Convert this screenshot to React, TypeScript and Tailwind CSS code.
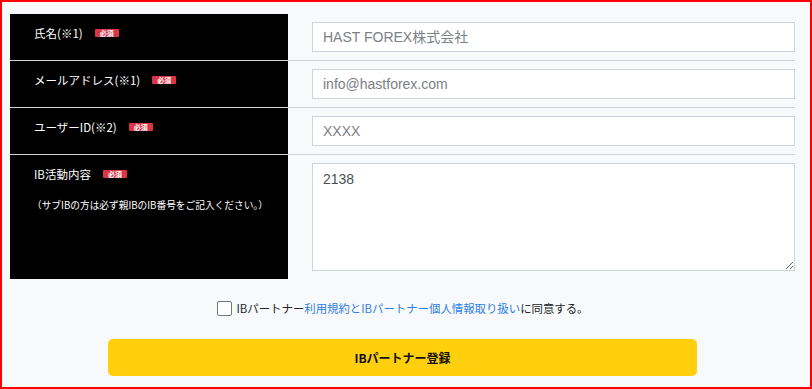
import React from "react";

const jp = { fontFamily: '"Noto Sans CJK JP", "Noto Sans", sans-serif' };
const latin = { fontFamily: '"Liberation Sans", "Noto Sans CJK JP", sans-serif' };

function Badge() {
  return (
    <span className="ml-[12px] inline-flex h-[8px] w-[24px] items-center justify-center rounded-[1px] bg-[#dc3545] text-[7px] font-bold leading-none text-white">
      必須
    </span>
  );
}

function Row({ label, placeholder }: { label: string; placeholder: string }) {
  return (
    <div className="flex border-b border-[#d2d2d2]">
      <div className="w-[278px] shrink-0 bg-black pl-6 pt-[10px]">
        <div className="flex items-center text-[11.5px] leading-[18px] text-white" style={jp}>
          <span>{label}</span>
          <Badge />
        </div>
      </div>
      <div className="flex-1 py-2 pl-6">
        <input
          className="h-[30px] w-full border border-[#ced4da] bg-white px-[10px] text-[14px] text-[#495057] outline-none placeholder:text-[#7b8085]"
          style={latin}
          placeholder={placeholder}
        />
      </div>
    </div>
  );
}

export default function App() {
  return (
    <div className="h-[389px] w-[812px] overflow-hidden border-2 border-[#ff0000] bg-[#f8f9fa] pl-2 pr-[15px] pt-3" style={jp}>
      <div className="flex flex-col">
        <Row label="氏名(※1)" placeholder="HAST FOREX株式会社" />
        <Row label="メールアドレス(※1)" placeholder="info@hastforex.com" />
        <Row label="ユーザーID(※2)" placeholder="XXXX" />
        <div className="flex">
          <div className="w-[278px] shrink-0 bg-black pl-6 pt-[10px]">
            <div className="flex items-center text-[11.5px] leading-[18px] text-white" style={jp}>
              <span>IB活動内容</span>
              <Badge />
            </div>
            <div className="mt-[15px] -ml-[2px] text-[9.7px] leading-[14px] text-white" style={jp}>
              （サブIBの方は必ず親IBのIB番号をご記入ください。）
            </div>
          </div>
          <div className="flex-1 py-2 pl-6">
            <textarea
              className="block h-[108px] w-full resize-y border border-[#ced4da] bg-white px-[10px] py-[5px] text-[14px] text-[#495057] outline-none"
              style={latin}
              defaultValue="2138"
            />
          </div>
        </div>
      </div>

      <div className="mt-[22px] flex items-center justify-center gap-[5px]">
        <input
          type="checkbox"
          className="m-0 h-[15px] w-[15px] appearance-none rounded-[2px] border border-[#767676] bg-white"
        />
        <span className="text-[11.4px] leading-[15px] text-[#212529]">
          IBパートナー<span className="text-[#2f7fe6]">利用規約とIBパートナー個人情報取り扱い</span>に同意する。
        </span>
      </div>

      <div className="mt-[23px] flex justify-center">
        <button className="flex h-[37px] w-[589px] items-center justify-center rounded-[5px] bg-[#ffcf0e] text-[12px] font-bold text-[#111]">
          IBパートナー登録
        </button>
      </div>
    </div>
  );
}
